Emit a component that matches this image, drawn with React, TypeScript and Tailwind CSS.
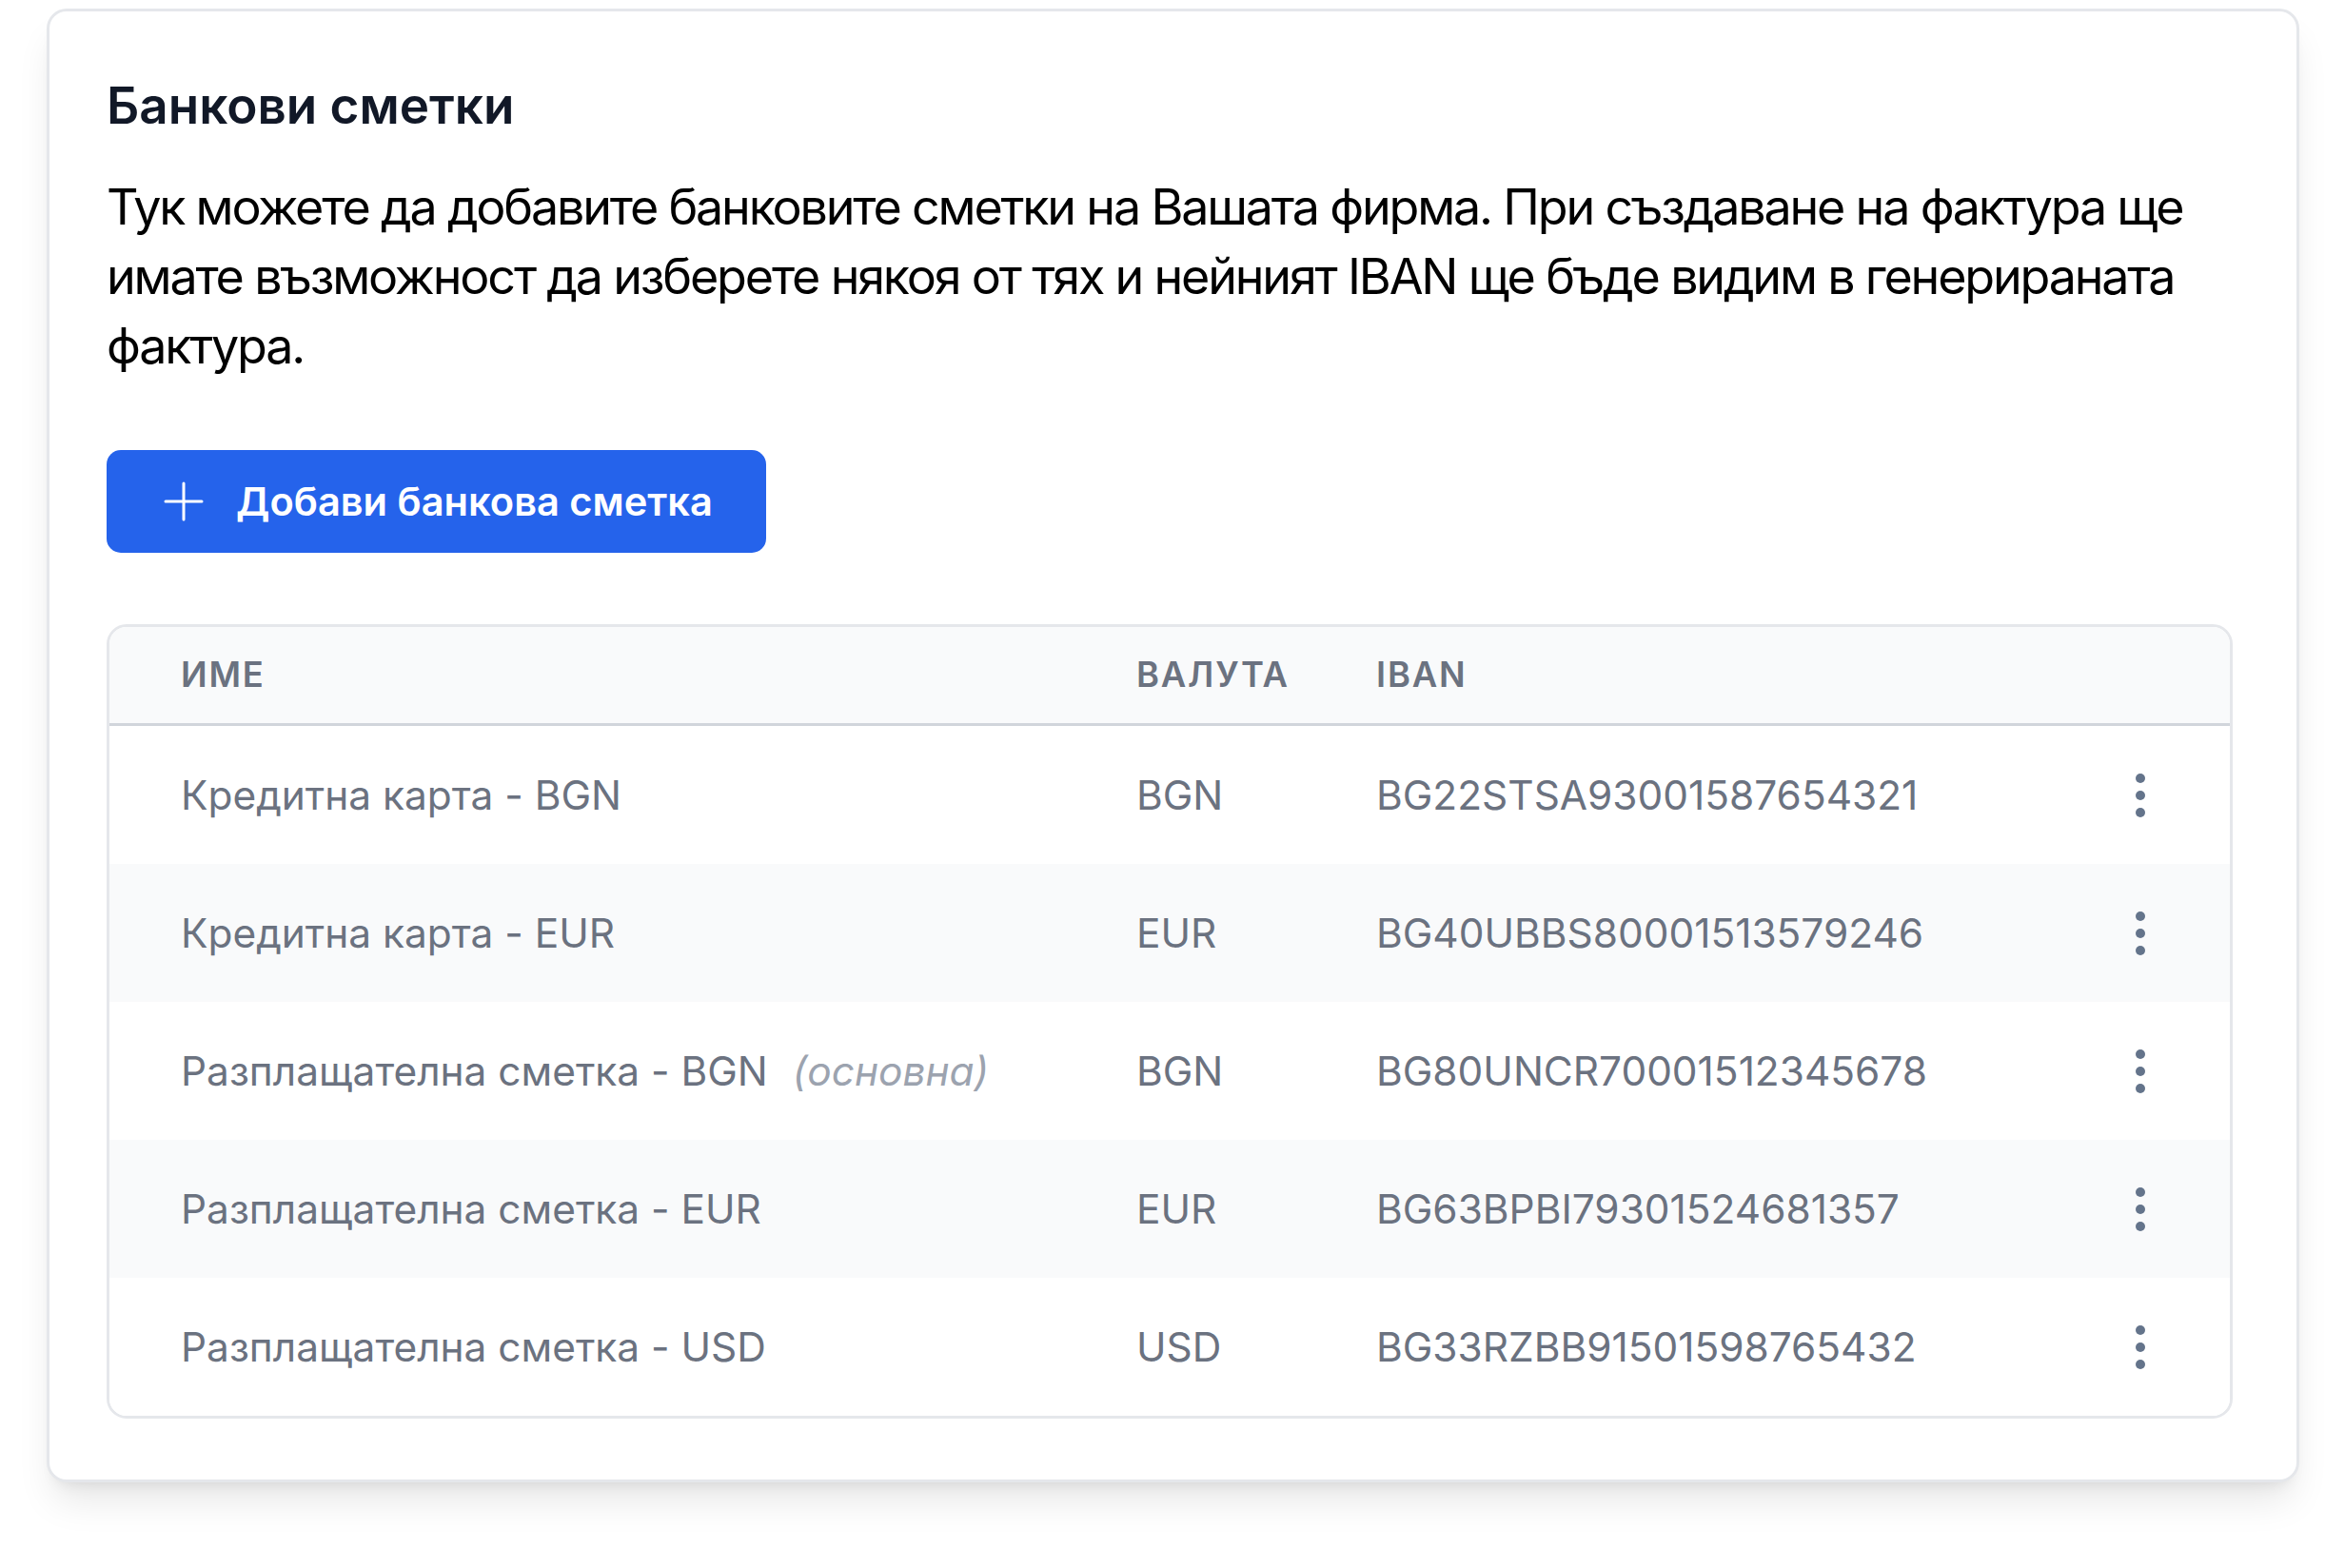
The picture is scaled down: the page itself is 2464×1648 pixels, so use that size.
import React from "react";

type Row = { name: string; cur: string; iban: string; primary?: boolean };

const rows: Row[] = [
  { name: "Кредитна карта - BGN", cur: "BGN", iban: "BG22STSA93001587654321" },
  { name: "Кредитна карта - EUR", cur: "EUR", iban: "BG40UBBS80001513579246" },
  { name: "Разплащателна сметка - BGN", cur: "BGN", iban: "BG80UNCR70001512345678", primary: true },
  { name: "Разплащателна сметка - EUR", cur: "EUR", iban: "BG63BPBI79301524681357" },
  { name: "Разплащателна сметка - USD", cur: "USD", iban: "BG33RZBB91501598765432" },
];

function Dots() {
  return (
    <svg width="46" height="46" viewBox="0 0 46 46" className="text-[#64748b]">
      <circle cx="23" cy="5" r="5" fill="currentColor" />
      <circle cx="23" cy="23" r="5" fill="currentColor" />
      <circle cx="23" cy="41" r="5" fill="currentColor" />
    </svg>
  );
}

function Plus() {
  return (
    <svg width="42" height="42" viewBox="0 0 42 42" fill="none" stroke="white" strokeWidth="3" strokeLinecap="round">
      <line x1="21" y1="2" x2="21" y2="40" />
      <line x1="2" y1="21" x2="40" y2="21" />
    </svg>
  );
}

export default function App() {
  return (
    <div
      className="w-[2464px] h-[1648px] bg-white pt-[9px] pl-[49px]"
      style={{ fontFamily: "Inter, 'Noto Sans', sans-serif" }}
    >
      <div className="w-[2367px] bg-white border-[3px] border-[#e5e7eb] rounded-[21px] pt-[63px] pl-[60px] pr-[67px] pb-[64px] shadow-[0_26px_39px_-8px_rgba(0,0,0,0.1),0_10px_16px_-10px_rgba(0,0,0,0.1)]">
        <h2 className="text-[53px] leading-[73px] font-semibold text-[#111827]">Банкови сметки</h2>
        <p className="mt-[33px] text-[52px] leading-[73px] tracking-[-0.042em] text-black">
          Тук можете да добавите банковите сметки на Вашата фирма. При създаване на фактура ще имате възможност да изберете някоя от тях и нейният IBAN ще бъде видим в генерираната фактура.
        </p>
        <button className="mt-[73px] h-[108px] flex items-center gap-[34px] pl-[60px] pr-[56px] bg-[#2563eb] rounded-[15px] text-white text-[41.6px] font-semibold">
          <Plus />
          <span>Добави банкова сметка</span>
        </button>
        <div className="mt-[75px] border-[3px] border-[#e5e7eb] rounded-[21px] overflow-hidden">
          <div className="h-[104px] bg-[#f9fafb] border-b-[3px] border-[#d1d5db] grid grid-cols-[1004px_252px_1fr_46px] items-center pl-[75px] pr-[71px] text-[36.4px] font-semibold uppercase tracking-wider text-[#6b7280]">
            <span>Име</span>
            <span>Валута</span>
            <span>IBAN</span>
            <span />
          </div>
          {rows.map((r, i) => (
            <div
              key={r.iban}
              className={`h-[145px] grid grid-cols-[1004px_252px_1fr_46px] items-center pl-[75px] pr-[71px] text-[42.4px] text-[#6b7280] ${
                i % 2 === 1 ? "bg-[#f9fafb]" : "bg-white"
              }`}
            >
              <span>
                {r.name}
                {r.primary && <span className="ml-[26px] italic text-[#9ca3af]">(основна)</span>}
              </span>
              <span>{r.cur}</span>
              <span>{r.iban}</span>
              <Dots />
            </div>
          ))}
        </div>
      </div>
    </div>
  );
}
